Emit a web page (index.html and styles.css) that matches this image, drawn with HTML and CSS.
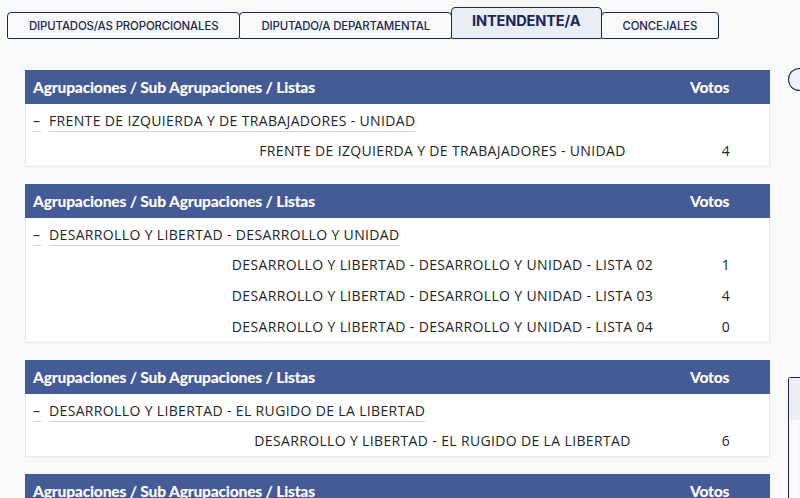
FILE: index.html
```html
<!DOCTYPE html>
<html lang="es">
<head>
<meta charset="utf-8">
<title>Resultados</title>
<link rel="stylesheet" href="styles.css">
</head>
<body>
<nav class="tabs">
  <a class="tab">DIPUTADOS/AS PROPORCIONALES</a>
  <a class="tab">DIPUTADO/A DEPARTAMENTAL</a>
  <a class="tab active">INTENDENTE/A</a>
  <a class="tab">CONCEJALES</a>
</nav>
<main class="layout">
  <div class="cards">
    <section class="card">
      <div class="card-head"><span>Agrupaciones / Sub Agrupaciones / Listas</span><span class="votos">Votos</span></div>
      <div class="group"><span class="toggle">–</span><span class="gname">FRENTE DE IZQUIERDA Y DE TRABAJADORES - UNIDAD</span></div>
      <div class="row"><span class="lname">FRENTE DE IZQUIERDA Y DE TRABAJADORES - UNIDAD</span><span class="num">4</span></div>
    </section>
    <section class="card">
      <div class="card-head"><span>Agrupaciones / Sub Agrupaciones / Listas</span><span class="votos">Votos</span></div>
      <div class="group"><span class="toggle">–</span><span class="gname">DESARROLLO Y LIBERTAD - DESARROLLO Y UNIDAD</span></div>
      <div class="row"><span class="lname">DESARROLLO Y LIBERTAD - DESARROLLO Y UNIDAD - LISTA 02</span><span class="num">1</span></div>
      <div class="row"><span class="lname">DESARROLLO Y LIBERTAD - DESARROLLO Y UNIDAD - LISTA 03</span><span class="num">4</span></div>
      <div class="row"><span class="lname">DESARROLLO Y LIBERTAD - DESARROLLO Y UNIDAD - LISTA 04</span><span class="num">0</span></div>
    </section>
    <section class="card">
      <div class="card-head"><span>Agrupaciones / Sub Agrupaciones / Listas</span><span class="votos">Votos</span></div>
      <div class="group"><span class="toggle">–</span><span class="gname">DESARROLLO Y LIBERTAD - EL RUGIDO DE LA LIBERTAD</span></div>
      <div class="row"><span class="lname">DESARROLLO Y LIBERTAD - EL RUGIDO DE LA LIBERTAD</span><span class="num">6</span></div>
    </section>
    <section class="card">
      <div class="card-head"><span>Agrupaciones / Sub Agrupaciones / Listas</span><span class="votos">Votos</span></div>
    </section>
  </div>
  <aside class="side">
    <div class="pill"></div>
    <div class="panel"><div class="panel-top"></div></div>
  </aside>
</main>
</body>
</html>
```

FILE: styles.css
```css
html, body {
  margin: 0;
  padding: 0;
  background: #f8f9fa;
  overflow: hidden;
  height: 498px;
}
body {
  font-family: "Open Sans", "Noto Sans", sans-serif;
  color: #212529;
}
.tabs {
  display: flex;
  align-items: flex-end;
  padding: 7px 0 0 7px;
  height: 32px;
}
.tab {
  box-sizing: border-box;
  height: 27px;
  padding: 0 21px;
  display: flex;
  align-items: center;
  border: 1px solid #1b2654;
  border-radius: 4px 4px 2px 2px;
  margin-right: -1px;
  font-family: Inter, "Noto Sans", sans-serif;
  font-weight: 500;
  font-size: 11.45px;
  color: #1b2654;
  background: #f8f9fa;
  letter-spacing: -0.15px;
}
.tab.active {
  height: 32px;
  background: #e9edf6;
  font-weight: 700;
  font-size: 14.6px;
  padding: 0 20px 5px;
  position: relative;
  z-index: 1;
}
.layout {
  display: grid;
  grid-template-columns: 745px 12px;
  column-gap: 18px;
  padding: 31px 0 0 25px;
}
.cards {
  display: flex;
  flex-direction: column;
  gap: 17px;
}
.card {
  background: #fff;
  border: 1px solid #e6e8eb;
  border-top: none;
  box-shadow: 0 1px 2px rgba(0,0,0,0.04);
}
.card-head,
.row {
  display: grid;
  grid-template-columns: 1fr 70px;
  padding-right: 10px;
}
.card-head {
  height: 34px;
  align-items: center;
  margin: 0 -1px;
  padding-left: 8px;
  background: #445b96;
  color: #fff;
  font-family: Lato, "Open Sans", sans-serif;
  font-weight: 900;
  font-size: 15.6px;
  letter-spacing: -0.2px;
}
.group {
  height: 31px;
  display: flex;
  align-items: center;
  padding-left: 7px;
  font-size: 14px;
  letter-spacing: 0.35px;
}
.toggle {
  display: inline-block;
  width: 8px;
  line-height: 18px;
  padding-bottom: 1px;
  border-bottom: 1px solid #d4d6d9;
  margin-right: 8px;
  margin-top: 4px;
  overflow: hidden;
}
.gname {
  line-height: 18px;
  padding-bottom: 1px;
  border-bottom: 1px solid #d4d6d9;
  margin-top: 4px;
}
.row {
  height: 31px;
  align-items: center;
  font-size: 14px;
  letter-spacing: 0.35px;
}
.lname {
  text-align: center;
  padding-left: 170px;
}
.num {
  text-align: center;
  padding-left: 4px;
}
.side {
  display: flex;
  flex-direction: column;
}
.pill {
  height: 23px;
  margin-top: -2px;
  box-sizing: border-box;
  border: 1.5px solid #1b2654;
  border-right: none;
  border-radius: 12px 0 0 12px;
  background: #eef0f8;
}
.panel {
  margin-top: 286px;
  height: 200px;
  box-sizing: border-box;
  border: 1.5px solid #1b2654;
  border-right: none;
  border-radius: 3px 0 0 0;
  background: #f9fafc;
}
.panel-top {
  height: 42px;
  background: #eceef5;
}
```
